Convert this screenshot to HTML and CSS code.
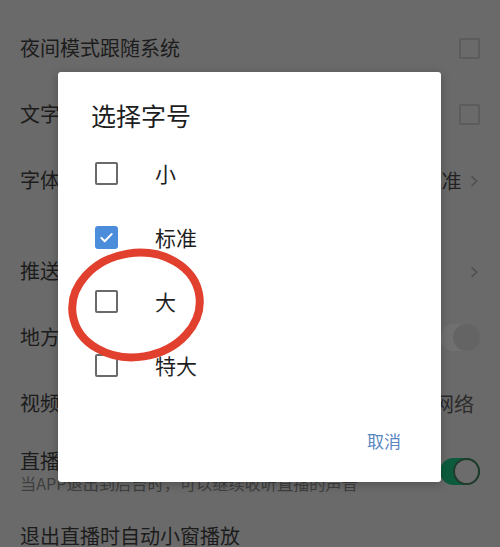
FILE: index.html
```html
<!DOCTYPE html>
<html lang="zh">
<head>
<meta charset="utf-8">
<link rel="stylesheet" href="styles.css">
</head>
<body>
<div class="page">
  <div class="section first">
    <div class="row"><span class="label">夜间模式跟随系统</span><span class="box"></span></div>
    <div class="row"><span class="label">文字大小跟随系统</span><span class="box"></span></div>
    <div class="row"><span class="label">字体大小</span><span class="value">标准<span class="chev">›</span></span></div>
  </div>
  <div class="section">
    <div class="row"><span class="label">推送设置</span><span class="value"><span class="chev">›</span></span></div>
    <div class="row"><span class="label">地方台推荐</span><span class="toggle off"><span class="knob"></span></span></div>
    <div class="row"><span class="label">视频自动播放</span><span class="value dim">仅WiFi网络</span></div>
    <div class="row tall"><span class="stack"><span class="label">直播后台播放</span><span class="sub">当APP退出到后台时，可以继续收听直播的声音</span></span><span class="toggle on"><span class="knob"></span></span></div>
    <div class="row"><span class="label">退出直播时自动小窗播放</span></div>
  </div>

  <div class="dialog">
    <div class="title">选择字号</div>
    <ul class="options">
      <li class="opt"><span class="cb"></span><span class="opt-label">小</span></li>
      <li class="opt"><span class="cb checked"><svg viewBox="0 0 24 24" width="24" height="24"><path d="M5.5 12.5l4.2 4.2 8.8-9" fill="none" stroke="#fff" stroke-width="2.6" stroke-linecap="round" stroke-linejoin="round"/></svg></span><span class="opt-label">标准</span></li>
      <li class="opt"><span class="cb"></span><span class="opt-label">大</span></li>
      <li class="opt"><span class="cb"></span><span class="opt-label">特大</span></li>
    </ul>
    <div class="actions"><span class="cancel">取消</span></div>
  </div>

  <svg class="mark" width="160" height="130" viewBox="0 0 160 130">
    <ellipse cx="80" cy="65" rx="64" ry="52" fill="none" stroke="#e2402f" stroke-width="8" transform="rotate(-9 80 65)"/>
  </svg>
</div>
</body>
</html>
```

FILE: styles.css
```css
* { box-sizing: border-box; margin: 0; padding: 0; }
html, body { width: 500px; height: 547px; overflow: hidden; }
body {
  background: #6a6a6a;
  font-family: "Noto Sans CJK SC", "Noto Sans", sans-serif;
  color: #1c1c1c;
}
.page { position: relative; width: 500px; height: 547px; }
.section { display: flex; flex-direction: column; }
.section.first { padding-top: 15px; padding-bottom: 25px; }
.row {
  height: 66px;
  display: flex;
  align-items: center;
  justify-content: space-between;
  padding: 0 20px;
}
.row.tall { height: 67px; padding-top: 3px; }
.label { font-size: 20px; line-height: 24px; color: #1c1c1c; }
.stack { display: flex; flex-direction: column; }
.sub { font-size: 16.2px; line-height: 20px; color: #3e3e3e; }
.box {
  width: 21px; height: 21px;
  border: 2px solid #5c5c5c;
  border-radius: 2px;
}
.value { font-size: 20px; color: #222; display: flex; align-items: center; }
.value.dim { color: #2a2a2a; margin-right: 6px; }
.chev { font-size: 26px; color: #4a4a4a; margin-left: 8px; line-height: 24px; font-family: "DejaVu Sans", sans-serif; font-weight: 300; }
.toggle {
  position: relative;
  width: 40px; height: 27px;
  border-radius: 14px;
}
.toggle .knob {
  position: absolute; top: 0; right: 0;
  width: 27px; height: 27px; border-radius: 50%;
}
.toggle.off { background: #707070; }
.toggle.off .knob { background: #646464; }
.toggle.on { background: #0c5b3c; }
.toggle.on .knob { background: #6c6c6c; border: 2px solid #203a2c; }

.dialog {
  position: absolute;
  left: 58px; top: 72px;
  width: 383px; height: 410px;
  background: #fff;
  border-radius: 3px;
  box-shadow: 0 2px 10px rgba(0,0,0,0.25);
  display: flex; flex-direction: column;
}
.title {
  font-size: 25px; line-height: 30px;
  color: #1e1e1e;
  padding: 28px 0 0 33px;
}
.options { list-style: none; padding-top: 11px; }
.opt {
  height: 64px;
  display: flex; align-items: center;
  padding-left: 37px;
}
.cb {
  width: 23px; height: 23px;
  border: 2.5px solid #6a6a6a;
  border-radius: 2px;
  display: flex; align-items: center; justify-content: center;
}
.cb.checked { background: #4b8ddb; border-color: #4b8ddb; border-radius: 3px; }
.cb svg { width: 21px; height: 21px; }
.opt-label { margin-left: 37px; font-size: 21px; color: #1e1e1e; }
.actions { display: flex; justify-content: flex-end; padding: 31px 40px 0 0; }
.cancel { font-size: 17px; color: #5a86c0; }

.mark { position: absolute; left: 56px; top: 240px; }
```
